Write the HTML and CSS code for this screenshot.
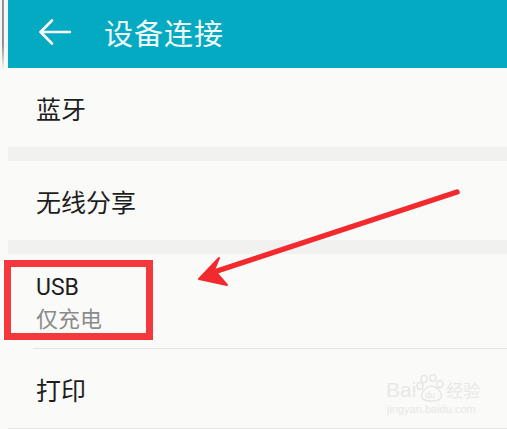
FILE: index.html
```html
<!DOCTYPE html>
<html lang="zh-CN">
<head>
    <meta charset="UTF-8">
    <meta name="viewport" content="width=device-width, initial-scale=1.0">
    <title>设备连接</title>
    <link rel="stylesheet" href="styles.css">
</head>
<body>

    <div class="screen">
        <div class="edge"></div>

        <div class="settings">
            <div class="topbar">
                <svg class="back" width="32" height="26" viewBox="0 0 32 26">
                    <path d="M13 1.5 L1.5 13 L13 24.5 M1.5 13 H31" fill="none" stroke="#fff" stroke-width="2.6" stroke-linecap="round" stroke-linejoin="round"/>
                </svg>
                <span class="title">设备连接</span>
            </div>

            <div class="item">蓝牙</div>
            <div class="band"></div>
            <div class="item">无线分享</div>
            <div class="band"></div>
            <div class="item item-tall">
                <span class="label">USB</span>
                <span class="sub">仅充电</span>
                <div class="mark"></div>
            </div>
            <div class="divider"></div>
            <div class="item">打印</div>
            <div class="divider full"></div>
        </div>

        <!-- red pointer drawn over the list -->
        <svg class="pointer" width="507" height="429" viewBox="0 0 507 429">
            <path d="M457 192 L214 272" stroke="#f22a2e" stroke-width="5.5" stroke-linecap="round"/>
            <path d="M199 279 L219 258 L214 270 L227 285 Z" fill="#f22a2e" stroke="#f22a2e" stroke-width="2" stroke-linejoin="round"/>
        </svg>

        <div class="watermark">
            <div class="wm-top">
                <span>Bai</span>
                <svg width="30" height="28" viewBox="0 0 30 28">
                    <g fill="none" stroke="#e6e6e4" stroke-width="1.4">
                        <ellipse cx="8" cy="5" rx="3" ry="3.5"/>
                        <ellipse cx="17" cy="4" rx="3" ry="3.5"/>
                        <ellipse cx="24" cy="10" rx="3" ry="3.5"/>
                        <ellipse cx="4" cy="12" rx="3" ry="3.5"/>
                        <path d="M6 24 C4 17 12 12 15 12 C20 12 27 18 25 24 C22 28 9 28 6 24 Z"/>
                    </g>
                    <text x="9" y="24" font-size="9" fill="#e6e6e4" font-family="Liberation Sans, sans-serif">du</text>
                </svg>
                <span class="wm-cn">经验</span>
            </div>
            <div class="wm-url">jingyan.baidu.com</div>
        </div>
    </div>

</body>
</html>
```

FILE: styles.css
```css
body {
    margin: 0;
    background-color: #fafaf8;
    font-family: "Noto Sans CJK SC", "Noto Sans", sans-serif;
}
.screen {
    position: relative;
    display: flex;
    width: 507px;
    height: 429px;
    overflow: hidden;
}
.edge {
    width: 8px;
    flex-shrink: 0;
    background: linear-gradient(to right, #f4f4f4 0, #f4f4f4 2px, #8a8a8a 2px, #9a9a9a 4px, #f6f6f6 4px);
    -webkit-mask-image: linear-gradient(to bottom, #000 0, #000 45px, transparent 70px);
}
.settings {
    flex: 1;
    display: flex;
    flex-direction: column;
}
.topbar {
    height: 68px;
    background-color: #04a9c2;
    display: flex;
    align-items: center;
    padding-left: 31px;
    padding-bottom: 5px;
    box-sizing: border-box;
}
.back {
    display: block;
}
.title {
    margin-left: 33px;
    color: #eef9fb;
    font-size: 29px;
    letter-spacing: 1px;
}
.item {
    height: 79px;
    display: flex;
    align-items: center;
    padding-left: 28px;
    font-size: 25px;
    color: #1e1e1e;
    background-color: #fafaf8;
}
.item-tall {
    position: relative;
    height: 94px;
    flex-direction: column;
    align-items: flex-start;
    justify-content: center;
}
.item-tall .label {
    font-family: "Roboto", "Noto Sans", sans-serif;
    font-size: 23px;
    line-height: 28px;
    margin-top: 4px;
}
.item-tall .sub {
    font-size: 22px;
    line-height: 30px;
    color: #8b8b8b;
}
.mark {
    position: absolute;
    left: -4px;
    top: 6px;
    width: 135px;
    height: 66px;
    border: 7px solid #f5383c;
}
.band {
    height: 14px;
    background-color: #f1f1ef;
}
.divider {
    height: 1px;
    margin-left: 25px;
    background-color: #e4e4e2;
}
.divider.full {
    margin-left: 0;
}
.pointer {
    position: absolute;
    left: 0;
    top: 0;
    pointer-events: none;
}
.watermark {
    position: absolute;
    left: 386px;
    top: 374px;
    color: #e8e8e6;
    font-family: "Liberation Sans", sans-serif;
}
.wm-top {
    display: flex;
    align-items: flex-end;
    font-size: 21px;
    line-height: 24px;
}
.wm-cn {
    font-family: "Noto Sans CJK SC", sans-serif;
    font-size: 17px;
}
.wm-url {
    font-size: 11px;
    margin-top: 1px;
    margin-left: 1px;
}
```
